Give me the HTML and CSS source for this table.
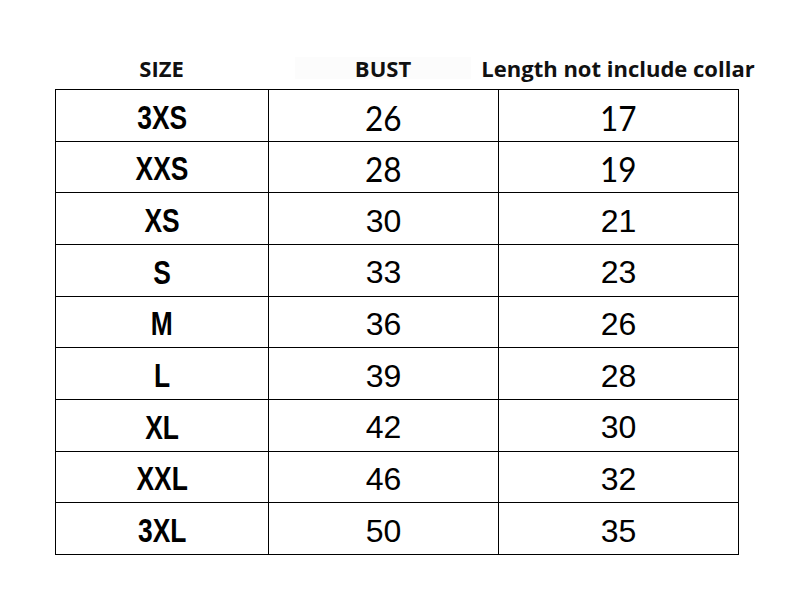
FILE: index.html
```html
<!DOCTYPE html>
<html>
<head>
<meta charset="utf-8">
<link rel="stylesheet" href="styles.css">
</head>
<body>
<div class="page">
  <div class="head">
    <div class="h"><span>SIZE</span></div>
    <div class="h"><span class="bust">BUST</span></div>
    <div class="h"><span>Length not include collar</span></div>
  </div>
  <div class="grid">
    <div class="c"><span class="sz">3XS</span></div><div class="c"><span class="cal">26</span></div><div class="c"><span class="cal">17</span></div>
    <div class="c"><span class="sz">XXS</span></div><div class="c"><span class="cal">28</span></div><div class="c"><span class="cal">19</span></div>
    <div class="c"><span class="sz">XS</span></div><div class="c"><span class="ar">30</span></div><div class="c"><span class="ar">21</span></div>
    <div class="c"><span class="sz">S</span></div><div class="c"><span class="ar">33</span></div><div class="c"><span class="ar">23</span></div>
    <div class="c"><span class="sz">M</span></div><div class="c"><span class="ar">36</span></div><div class="c"><span class="ar">26</span></div>
    <div class="c"><span class="sz">L</span></div><div class="c"><span class="ar">39</span></div><div class="c"><span class="ar">28</span></div>
    <div class="c"><span class="sz">XL</span></div><div class="c"><span class="ar">42</span></div><div class="c"><span class="ar">30</span></div>
    <div class="c"><span class="sz">XXL</span></div><div class="c"><span class="ar">46</span></div><div class="c"><span class="ar">32</span></div>
    <div class="c"><span class="sz">3XL</span></div><div class="c"><span class="ar">50</span></div><div class="c"><span class="ar">35</span></div>
  </div>
</div>
</body>
</html>
```
FILE: styles.css
```css
html, body {
  margin: 0;
  padding: 0;
  background: #fff;
}
.page {
  width: 792px;
  height: 591px;
  padding-left: 55px;
  box-sizing: border-box;
  color: #000;
}
.head {
  display: grid;
  grid-template-columns: 213px 230px 240px;
  height: 89px;
  align-items: end;
}
.h {
  display: flex;
  justify-content: center;
  font-family: "Open Sans", "Noto Sans", sans-serif;
  font-weight: 700;
  font-size: 22px;
  line-height: 22px;
  white-space: nowrap;
  padding-bottom: 10px;
  color: #111;
}
.bust {
  display: inline-block;
  padding: 0 60px;
  background: #fcfcfc;
}
.grid {
  display: grid;
  grid-template-columns: 213px 230px 240px;
  grid-auto-rows: 51.67px;
  width: 684px;
  box-sizing: border-box;
  border-top: 1.5px solid #000;
  border-left: 1.5px solid #000;
}
.c {
  display: flex;
  align-items: center;
  justify-content: center;
  border-right: 1.5px solid #000;
  border-bottom: 1.5px solid #000;
  padding-top: 4px;
  box-sizing: border-box;
}
.sz {
  display: inline-block;
  font-family: "Liberation Sans", Arial, sans-serif;
  font-weight: 700;
  font-size: 33px;
  transform: scaleX(0.8);
  line-height: 1;
}
.ar {
  display: inline-block;
  font-family: "Liberation Sans", Arial, sans-serif;
  font-size: 32px;
  line-height: 1;
}
.cal {
  display: inline-block;
  font-family: Lato, "Open Sans", sans-serif;
  font-size: 35px;
  line-height: 1;
  transform: scaleX(0.9);
}
```
